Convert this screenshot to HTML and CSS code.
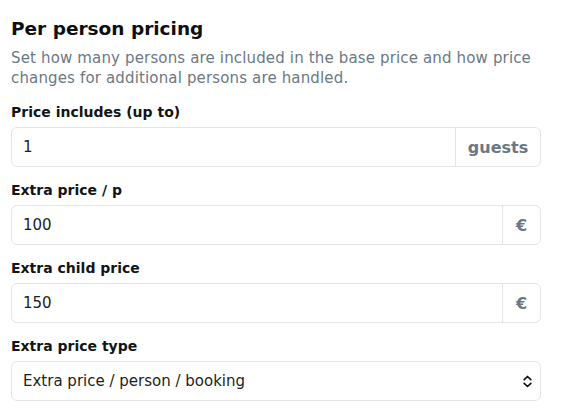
FILE: index.html
```html
<!DOCTYPE html>
<html>
<head>
<meta charset="utf-8">
<link rel="stylesheet" href="styles.css">
</head>
<body>
<div class="panel">
  <h2 class="title">Per person pricing</h2>
  <p class="desc">Set how many persons are included in the base price and how price changes for additional persons are handled.</p>

  <div class="field">
    <div class="label">Price includes (up to)</div>
    <div class="group">
      <div class="input">1</div>
      <div class="addon addon-text">guests</div>
    </div>
  </div>

  <div class="field">
    <div class="label">Extra price / p</div>
    <div class="group">
      <div class="input">100</div>
      <div class="addon addon-euro">€</div>
    </div>
  </div>

  <div class="field">
    <div class="label">Extra child price</div>
    <div class="group">
      <div class="input">150</div>
      <div class="addon addon-euro">€</div>
    </div>
  </div>

  <div class="field">
    <div class="label">Extra price type</div>
    <div class="group select">
      <div class="input">Extra price / person / booking</div>
      <svg class="chev" width="9" height="13" viewBox="0 0 9 13">
        <path d="M1.2 4.6 L4.5 1.5 L7.8 4.6" fill="none" stroke="#111" stroke-width="1.7" stroke-linecap="round" stroke-linejoin="round"/>
        <path d="M1.2 8.4 L4.5 11.5 L7.8 8.4" fill="none" stroke="#111" stroke-width="1.7" stroke-linecap="round" stroke-linejoin="round"/>
      </svg>
    </div>
  </div>
</div>
</body>
</html>
```
FILE: styles.css
```css
html, body {
  margin: 0;
  padding: 0;
  background: #ffffff;
}
body {
  font-family: "DejaVu Sans", sans-serif;
  color: #111418;
}
.panel {
  width: 530px;
  padding: 17px 0 0 11px;
}
.title {
  margin: 0;
  font-size: 18.5px;
  line-height: 24px;
  font-weight: 700;
  color: #0d0f12;
}
.desc {
  margin: 8px 0 14px 0;
  font-size: 15px;
  line-height: 19.5px;
  letter-spacing: 0.15px;
  color: #6c7884;
}
.field {
  margin-bottom: 13px;
}
.label {
  font-size: 14px;
  line-height: 20px;
  font-weight: 700;
  margin-bottom: 5px;
  color: #111418;
}
.group {
  display: flex;
  height: 40px;
  box-sizing: border-box;
  border: 1px solid #e3e5e8;
  border-radius: 6px;
  align-items: stretch;
}
.input {
  flex: 1;
  display: flex;
  align-items: center;
  padding-left: 11px;
  font-size: 15px;
  color: #1b1e22;
}
.addon {
  display: flex;
  align-items: center;
  justify-content: center;
  border-left: 1px solid #e3e5e8;
  color: #6b7783;
  font-weight: 700;
}
.addon-text {
  width: 84px;
  font-size: 16px;
}
.addon-euro {
  width: 37px;
  font-size: 16px;
}
.select {
  align-items: center;
}
.select .input {
  height: 100%;
}
.chev {
  margin-right: 8px;
}
```
